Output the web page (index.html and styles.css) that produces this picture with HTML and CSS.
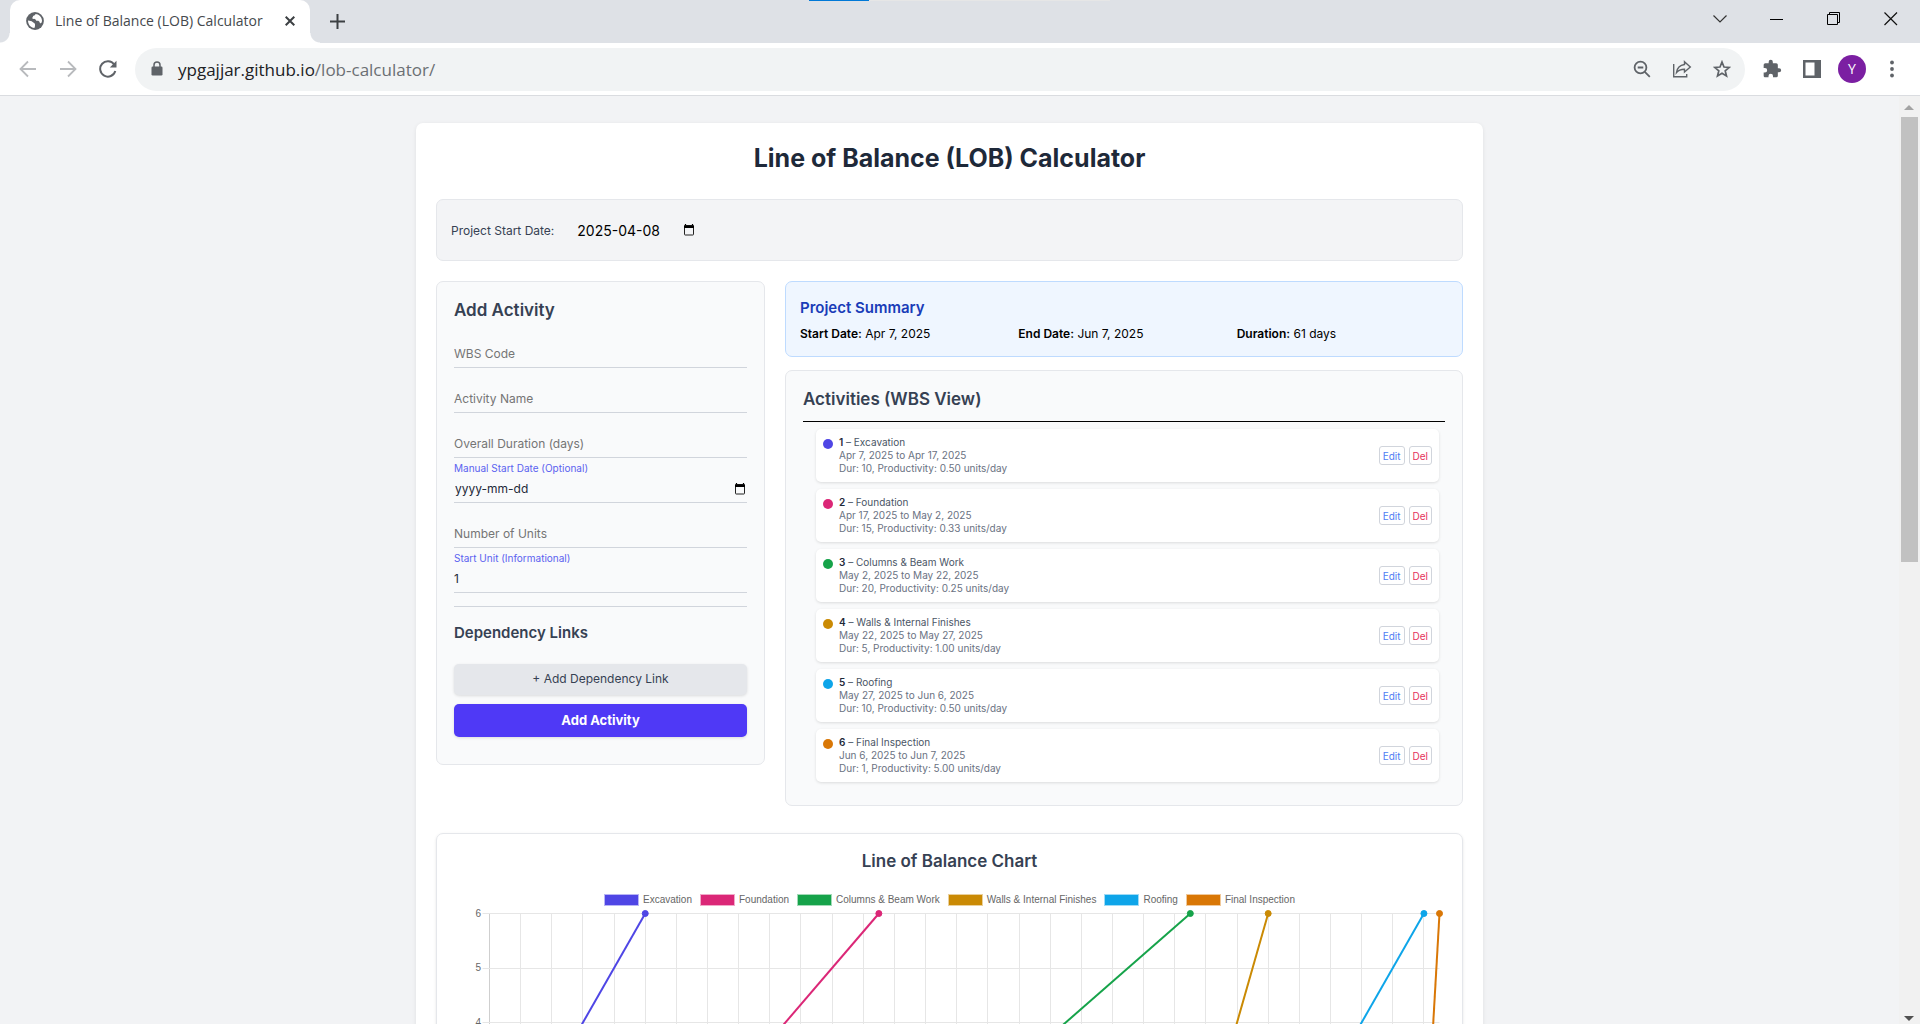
FILE: index.html
```html
<!DOCTYPE html>
<html lang="en">
<head>
<meta charset="utf-8">
<title>Line of Balance (LOB) Calculator</title>
<link rel="stylesheet" href="styles.css">
</head>
<body>
<header class="browser">
  <div class="tabstrip">
    <span class="load-bar"></span>
    <div class="tab">
      <svg class="globe" width="18" height="18" viewBox="0 0 18 18"><circle cx="9" cy="9" r="8.900" fill="#5f6368"/><path d="M2 8.500c2 .6 3.600.3 4.600 1.500.9 1.100 2.300.7 2.400 2.200 0 1 .3 1.800-.6 3.800C4.600 15.700 2 12.500 2 8.500zM9.500 2c-.3 1.300-1 1.500-2 1.800-.6.3-.4 1.200-1 1.600-.6.300-.1 1.700 1.100 1.500 1.400-.2 1.800.6 2.600 1.500.8.800 2.300.2 3 1 .8.800.3 1.700 1.300 1.900.9.100 1.500-1.300 1.500-2.800C15.800 4.900 13 2.200 9.500 2z" fill="#fff"/></svg>
      <span class="tab-title">Line of Balance (LOB) Calculator</span>
      <button class="plain" aria-label="Close tab"><svg width="10" height="10" viewBox="0 0 10 10" stroke="#3c4043" stroke-width="2"><path d="M.7.7l8.600 8.600M9.300.7L.7 9.300"/></svg></button>
    </div>
    <button class="plain new-tab" aria-label="New tab"><svg width="15" height="15" viewBox="0 0 15 15" stroke="#3c4043" stroke-width="2"><path d="M7.500 0v15M0 7.500h15"/></svg></button>
    <div class="window-controls">
      <button class="plain" aria-label="Search tabs"><svg width="14" height="14" viewBox="0 0 14 14" fill="none" stroke="#333" stroke-width="1.200"><path d="M.5 3.500L7 10l6.500-6.500"/></svg></button>
      <button class="plain" aria-label="Minimize"><svg width="14" height="14" viewBox="0 0 14 14"><path d="M0 7h13v1H0z"/></svg></button>
      <button class="plain" aria-label="Restore"><svg width="14" height="14" viewBox="0 0 14 14" fill="none" stroke="#000"><path d="M.5 2.500h10v10H.5zM2.500 2.500v-2h10v10h-2"/></svg></button>
      <button class="plain" aria-label="Close"><svg width="14" height="14" viewBox="0 0 14 14" stroke="#111" stroke-width="1.200"><path d="M.5.5l12.500 12.500M13 .5L.5 13"/></svg></button>
    </div>
  </div>
  <div class="toolbar">
    <div class="nav">
      <button class="plain" aria-label="Back"><svg width="18" height="18" viewBox="0 0 18 18" fill="none" stroke="#b8babd" stroke-width="1.800"><path d="M17 9H2M9 1.500L1.500 9 9 16.500"/></svg></button>
      <button class="plain" aria-label="Forward"><svg width="18" height="18" viewBox="0 0 18 18" fill="none" stroke="#b8babd" stroke-width="1.800"><path d="M1 9h15M9 1.500L16.500 9 9 16.500"/></svg></button>
      <button class="plain" aria-label="Reload"><svg width="18" height="18" viewBox="0 0 18 18" fill="none" stroke="#5f6368" stroke-width="2"><path d="M15.200 4.500A7.700 7.700 0 1 0 16.300 11"/><path d="M17.500.8v6.700h-6.700z" fill="#5f6368" stroke="none"/></svg></button>
    </div>
    <div class="omnibox">
      <svg width="12" height="16" viewBox="0 0 12 16"><rect x="0.500" y="5.500" width="11" height="9" rx="1.200" fill="#5f6368"/><path d="M3 6V4a3 3 0 0 1 6 0v2" fill="none" stroke="#5f6368" stroke-width="1.500"/></svg>
      <span class="url">ypgajjar.github.io<span class="url-path">/lob-calculator/</span></span>
      <div class="omni-actions">
        <button class="plain" aria-label="Zoom"><svg width="18" height="18" viewBox="0 0 18 18" fill="none" stroke="#5f6368" stroke-width="1.800"><circle cx="7.500" cy="7.500" r="5.900"/><path d="M4.700 7.500h5.600M11.800 11.800l5 5"/></svg></button>
        <button class="plain" aria-label="Share"><svg width="20" height="18" viewBox="0 0 20 18" fill="none" stroke="#5f6368" stroke-width="1.400"><path d="M1.700 4v12.800h13V14"/><path d="M12.500 1.700L18.300 7l-5.800 5V9.200c-3.400 0-6 .8-8 3.300.6-4.200 3-7.300 8-8z"/></svg></button>
        <button class="plain" aria-label="Bookmark"><svg width="18" height="18" viewBox="0 0 18 18" fill="none" stroke="#5f6368" stroke-width="1.700"><path d="M9 2l2 5 5.300.4-4.100 3.400 1.300 5.200L9 13.200 4.500 16l1.300-5.200L1.700 7.400 7 7z"/></svg></button>
      </div>
    </div>
    <div class="tools">
      <button class="plain" aria-label="Extensions"><svg width="20" height="20" viewBox="0 0 24 24" fill="#5f6368"><path d="M20.500 11H19V7a2 2 0 0 0-2-2h-4V3.500a2.500 2.500 0 0 0-5 0V5H4a2 2 0 0 0-2 2v3.800h1.500a2.700 2.700 0 0 1 0 5.400H2V20c0 1.100.9 2 2 2h3.800v-1.500a2.700 2.700 0 0 1 5.400 0V22H17a2 2 0 0 0 2-2v-4h1.500a2.500 2.500 0 0 0 0-5z"/></svg></button>
      <button class="plain" aria-label="Side panel"><svg width="18" height="18" viewBox="0 0 18 18"><path d="M0 0h18v18H0zM2.500 2.500v13H11.500v-13z" fill="#5f6368" fill-rule="evenodd"/></svg></button>
      <button class="plain" aria-label="Profile"><span class="avatar">Y</span></button>
      <button class="plain" aria-label="Menu"><svg width="4" height="18" viewBox="0 0 4 18" fill="#5f6368"><circle cx="2" cy="2.500" r="1.900"/><circle cx="2" cy="9" r="1.900"/><circle cx="2" cy="15.500" r="1.900"/></svg></button>
    </div>
  </div>
</header>

<div class="viewport">
  <div class="page">
    <main class="sheet">
      <h1>Line of Balance (LOB) Calculator</h1>

      <section class="start-box">
        <label for="project-start">Project Start Date:</label>
        <div class="date-field">
          <input id="project-start" type="text" value="2025-04-08">
          <button class="plain" aria-label="Pick project start date"><svg class="cal" width="12" height="12" viewBox="0 0 12 12"><path d="M2.500 0v2M9.500 0v2" stroke="#000" stroke-width="1.200"/><rect x="1.500" y="1.500" width="9" height="9.500" rx=".6" fill="none" stroke="#222"/><path d="M1 1.500h10v2.500H1z"/></svg></button>
        </div>
      </section>

      <div class="columns">
        <form class="panel form">
          <h2>Add Activity</h2>
          <div class="field"><input type="text" placeholder="WBS Code" aria-label="WBS Code"></div>
          <div class="field"><input type="text" placeholder="Activity Name" aria-label="Activity Name"></div>
          <div class="field"><input type="text" placeholder="Overall Duration (days)" aria-label="Overall Duration (days)"></div>
          <div class="field">
            <label for="manual-start">Manual Start Date (Optional)</label>
            <div class="date-row">
              <input id="manual-start" type="text" value="yyyy-mm-dd">
              <button type="button" class="plain" aria-label="Pick manual start date"><svg class="cal" width="12" height="12" viewBox="0 0 12 12"><path d="M2.500 0v2M9.500 0v2" stroke="#000" stroke-width="1.200"/><rect x="1.500" y="1.500" width="9" height="9.500" rx=".6" fill="none" stroke="#222"/><path d="M1 1.500h10v2.500H1z"/></svg></button>
            </div>
          </div>
          <div class="field"><input type="text" placeholder="Number of Units" aria-label="Number of Units"></div>
          <div class="field">
            <label for="start-unit">Start Unit (Informational)</label>
            <input id="start-unit" type="text" value="1">
          </div>
          <hr>
          <h3>Dependency Links</h3>
          <button type="button" class="btn btn-muted">+ Add Dependency Link</button>
          <button type="button" class="btn btn-primary">Add Activity</button>
        </form>

        <div class="right">
          <section class="summary">
            <h3>Project Summary</h3>
            <div class="summary-grid">
              <p><strong>Start Date:</strong> Apr 7, 2025</p>
              <p><strong>End Date:</strong> Jun 7, 2025</p>
              <p><strong>Duration:</strong> 61 days</p>
            </div>
          </section>

          <section class="panel activities">
            <h2>Activities (WBS View)</h2>
            <ul>
              <li><span class="dot indigo"></span><div class="info"><p class="name"><strong>1</strong> – Excavation</p><p>Apr 7, 2025 to Apr 17, 2025</p><p>Dur: 10, Productivity: 0.50 units/day</p></div><button class="mini edit">Edit</button><button class="mini del">Del</button></li>
              <li><span class="dot pink"></span><div class="info"><p class="name"><strong>2</strong> – Foundation</p><p>Apr 17, 2025 to May 2, 2025</p><p>Dur: 15, Productivity: 0.33 units/day</p></div><button class="mini edit">Edit</button><button class="mini del">Del</button></li>
              <li><span class="dot green"></span><div class="info"><p class="name"><strong>3</strong> – Columns &amp; Beam Work</p><p>May 2, 2025 to May 22, 2025</p><p>Dur: 20, Productivity: 0.25 units/day</p></div><button class="mini edit">Edit</button><button class="mini del">Del</button></li>
              <li><span class="dot gold"></span><div class="info"><p class="name"><strong>4</strong> – Walls &amp; Internal Finishes</p><p>May 22, 2025 to May 27, 2025</p><p>Dur: 5, Productivity: 1.00 units/day</p></div><button class="mini edit">Edit</button><button class="mini del">Del</button></li>
              <li><span class="dot sky"></span><div class="info"><p class="name"><strong>5</strong> – Roofing</p><p>May 27, 2025 to Jun 6, 2025</p><p>Dur: 10, Productivity: 0.50 units/day</p></div><button class="mini edit">Edit</button><button class="mini del">Del</button></li>
              <li><span class="dot orange"></span><div class="info"><p class="name"><strong>6</strong> – Final Inspection</p><p>Jun 6, 2025 to Jun 7, 2025</p><p>Dur: 1, Productivity: 5.00 units/day</p></div><button class="mini edit">Edit</button><button class="mini del">Del</button></li>
            </ul>
          </section>
        </div>
      </div>

      <section class="chart-card">
        <h2>Line of Balance Chart</h2>
        <div class="legend">
          <span class="key"><i class="swatch indigo"></i>Excavation</span>
          <span class="key"><i class="swatch pink"></i>Foundation</span>
          <span class="key"><i class="swatch green"></i>Columns &amp; Beam Work</span>
          <span class="key"><i class="swatch gold"></i>Walls &amp; Internal Finishes</span>
          <span class="key"><i class="swatch sky"></i>Roofing</span>
          <span class="key"><i class="swatch orange"></i>Final Inspection</span>
        </div>
        <svg class="chart" viewBox="0 0 993 300" id="chart" role="img" aria-label="Units completed over time"></svg>
      </section>
    </main>
  </div>
  <div class="scrollbar" aria-hidden="true">
    <svg width="19" height="20" viewBox="0 0 19 20"><path d="M5 14l5-5 5 5z" fill="#a3a3a3"/></svg>
    <span class="thumb"></span>
    <svg width="19" height="20" viewBox="0 0 19 20"><path d="M5 12l5 5 5-5z" fill="#505050"/></svg>
  </div>
</div>
<script src="chart.js"></script>
</body>
</html>
```
FILE: styles.css
```css
* { box-sizing: border-box; }
body { margin: 0; height: 100vh; display: flex; flex-direction: column; overflow: hidden; background: #f2f3f5; font-family: Inter, "Liberation Sans", sans-serif; color: #000; }
h1, h2, h3, p, ul { margin: 0; padding: 0; }
button, input { font-family: inherit; margin: 0; }
.plain { display: flex; align-items: center; justify-content: center; padding: 0; border: 0; background: none; }

/* Browser window */
.browser { flex: none; font-family: "Open Sans", "Noto Sans", sans-serif; border-bottom: 1px solid #dadce0; background: #fff; }
.tabstrip { position: relative; display: flex; align-items: flex-start; height: 43px; padding: 0 1px 0 10px; background: #dee1e6; }
.load-bar { position: absolute; top: 0; left: 42.125%; width: 301px; height: 1px; background: linear-gradient(90deg, #0078d7 60px, #e6e6e6 60px); }
.tab { position: relative; display: flex; align-items: center; width: 300px; height: 43px; padding: 0 15px 2px 16px; border-radius: 10px 10px 0 0; background: #fff; }
.tab::before, .tab::after { content: ""; position: absolute; bottom: 0; width: 10px; height: 10px; }
.tab::before { left: -10px; background: radial-gradient(circle at 0 0, #dee1e6 9px, #fff 10px); }
.tab::after { right: -10px; background: radial-gradient(circle at 100% 0, #dee1e6 9px, #fff 10px); }
.tab-title { flex: 1; padding-left: 11px; font-size: 14px; color: #45494d; white-space: nowrap; }
.new-tab { width: 55px; height: 42px; }
.window-controls { display: flex; margin-left: auto; }
.window-controls .plain { width: 57px; height: 37px; }
.toolbar { display: flex; align-items: center; height: 52px; padding: 0 8px; }
.nav { display: flex; width: 127px; }
.toolbar .plain { width: 40px; height: 40px; }
.omnibox { display: flex; align-items: center; flex: 1; height: 43px; padding: 0 3px 0 16px; border-radius: 22px; background: #f1f3f4; }
.url { padding-left: 15px; font-size: 17px; color: #202124; }
.url-path { color: #6b6f73; }
.omni-actions { display: flex; margin-left: auto; }
.tools { display: flex; align-items: center; padding-left: 7px; }
.avatar { width: 28px; height: 28px; line-height: 28px; border-radius: 50%; background: #7b1fa2; color: #fff; font-size: 14px; }

/* Scrolling area */
.viewport { flex: 1; min-height: 0; display: flex; }
.page { flex: 1; min-width: 0; overflow: hidden; padding: 27px 20px; }
.scrollbar { display: flex; flex-direction: column; width: 21px; background: #f1f1f1; }
.scrollbar svg { flex: none; }
.thumb { width: 17px; height: 48%; margin: 1px 2px auto; background: #c1c1c1; }

.sheet { max-width: 1067px; margin: 0 auto; padding: 20px; border-radius: 7px; background: #fff; box-shadow: 0 1px 4px rgba(0, 0, 0, .08); }
h1 { margin-bottom: 26px; font-size: 25px; line-height: 30px; font-weight: 700; text-align: center; color: #1e2939; }
h2 { font-size: 17px; line-height: 24px; font-weight: 600; color: #364153; }
h3 { font-size: 15px; line-height: 20px; font-weight: 600; }

.start-box { display: flex; align-items: center; height: 62px; margin-bottom: 20px; padding: 0 14px; border: 1px solid #e5e7eb; border-radius: 7px; background: #f3f4f6; font-size: 12px; color: #364153; }
.date-field { display: flex; align-items: center; gap: 6px; padding-left: 23px; }
.date-field input { width: 100px; padding: 0; border: 0; background: none; font-size: 14px; color: #000; }

.columns { display: flex; align-items: flex-start; gap: 20px; margin-bottom: 27px; }
.panel { border: 1px solid #e5e7eb; border-radius: 7px; background: #f9fafb; }
.form { flex: 0 0 329px; padding: 16px 17px 27px; }
.form h2 { margin-bottom: 1px; }
.field { display: flex; flex-direction: column; justify-content: flex-end; height: 45px; }
.field label { font-size: 10px; line-height: 16px; color: #5b62f0; }
.field input { width: 100%; height: 27px; padding: 0 0 2px; border: 0; border-bottom: 1px solid #d1d5dc; border-radius: 0; background: none; font-size: 12px; color: #1e2939; }
.field input::placeholder { color: #757575; opacity: 1; }
.date-row { display: flex; align-items: center; border-bottom: 1px solid #d1d5dc; padding-right: 1px; }
.date-row input { height: 26px; border: 0; padding: 0 0 1px 1px; }
.form hr { width: 100%; height: 1px; margin: 13px 0 16px; border: 0; background: #d1d5dc; }
.form h3 { margin-bottom: 21px; color: #364153; }
.btn { display: block; width: 100%; border: 0; border-radius: 5px; box-shadow: 0 1px 3px rgba(0, 0, 0, .12); }
.btn-muted { height: 31px; margin-bottom: 9px; padding: 0 0 2px; background: #e5e7eb; color: #364153; font-size: 12px; }
.btn-primary { height: 33px; padding: 0 0 2px; background: #4f39f6; color: #fff; font-size: 13px; font-weight: 700; }

.right { flex: 1; min-width: 0; display: flex; flex-direction: column; gap: 13px; }
.summary { height: 76px; padding: 16px 14px; border: 1px solid #bedbff; border-radius: 7px; background: #eff6ff; }
.summary h3 { margin-bottom: 8px; color: #193cb8; }
.summary-grid { display: grid; grid-template-columns: repeat(3, 1fr); gap: 7px; font-size: 12px; line-height: 16px; }
strong { font-weight: 600; }

.activities { padding: 16px 17px 23px; }
.activities h2 { padding-bottom: 10px; border-bottom: 1px solid #000; }
.activities ul { display: grid; gap: 7px; margin: 7px 6px 0 13px; list-style: none; }
.activities li { display: flex; align-items: center; gap: 4px; height: 53px; padding: 0 7px; border-radius: 5px; background: #fff; box-shadow: 0 1px 3px rgba(0, 0, 0, .12); }
.info { flex: 1; padding-left: 2px; font-size: 10px; line-height: 13px; color: #6a7282; }
.name { color: #4a5565; }
.name strong { color: #1e2939; }
.dot { width: 10px; height: 10px; margin-bottom: 24px; border-radius: 50%; background: var(--tone); }
.mini { height: 19px; padding: 0 3px; border: 1px solid #d1d5dc; border-radius: 3px; background: #fff; font-size: 10px; line-height: 16px; }
.edit { color: #4f7df3; }
.del { color: #e5325b; }

.indigo { --tone: #4f46e5; }
.pink { --tone: #db2777; }
.green { --tone: #16a34a; }
.gold { --tone: #ca8a04; }
.sky { --tone: #0ea5e9; }
.orange { --tone: #d97706; }

/* Chart */
.chart-card { padding: 15px 16px; border: 1px solid #e5e7eb; border-radius: 7px; box-shadow: 0 1px 3px rgba(0, 0, 0, .1); }
.chart-card h2 { margin-bottom: 21px; text-align: center; }
.legend { display: flex; justify-content: center; gap: 8px; font: 10px/12px "Liberation Sans", Arial, sans-serif; color: #666; }
.key { display: flex; align-items: center; gap: 4px; }
.swatch { width: 35px; height: 12px; border: 1px solid color-mix(in srgb, var(--tone) 40%, #fff); background: var(--tone); }
.chart { display: block; width: 100%; }
.chart text { font: 10px "Liberation Sans", Arial, sans-serif; fill: #666; text-anchor: end; }
.grid-line { stroke: #e6e6e6; stroke-width: 1; }
.axis { stroke: #cfcfcf; stroke-width: 1; }
.series { stroke: var(--tone); fill: var(--tone); stroke-width: 2; }
```
FILE: chart.js
```js
// Each activity runs from unit 1 on its start day to unit 6 on its end day.
const activities = [
  ["indigo", 0, 10], ["pink", 10, 25], ["green", 25, 45],
  ["gold", 45, 50], ["sky", 50, 60], ["orange", 60, 61]
];
const left = 36.5, right = 986.5, top6 = 7.5, unit = 54.5, days = 61;
const x = day => left + day * (right - left) / days;
const y = units => top6 + (6 - units) * unit;
const snap = value => Math.floor(value) + 0.5;
let out = "";
for (let day = 0; day <= days; day += 2) {
  out += `<line class="${day ? "grid-line" : "axis"}" x1="${snap(x(day))}" x2="${snap(x(day))}" y1="${top6}" y2="${y(1)}"/>`;
}
for (let units = 6; units >= 1; units--) {
  out += `<line class="grid-line" x1="${left - 7}" x2="${right}" y1="${snap(y(units))}" y2="${snap(y(units))}"/>`;
  out += `<text x="28" y="${Math.round(y(units)) + 3}">${units}</text>`;
}
for (const [tone, start, end] of activities) {
  out += `<g class="series ${tone}"><line x1="${x(start)}" y1="${y(1)}" x2="${x(end)}" y2="${y(6)}"/><circle cx="${x(end)}" cy="${y(6)}" r="3" stroke-width="1"/></g>`;
}
document.getElementById("chart").innerHTML = out;
```
